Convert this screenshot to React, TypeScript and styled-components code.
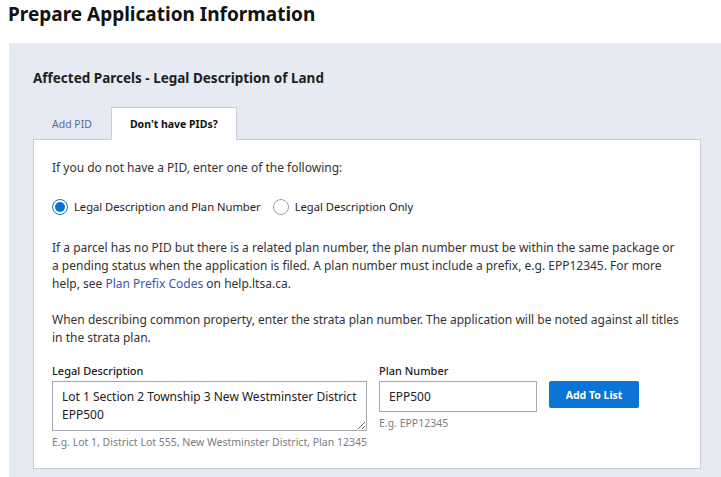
import styled, { createGlobalStyle } from 'styled-components';
import { useState } from 'react';

const GlobalStyle = createGlobalStyle`
  html, body {
    margin: 0;
    padding: 0;
    background: #fff;
    overflow: hidden;
  }
  body {
    font-family: "Noto Sans", "Open Sans", sans-serif;
    color: #313132;
  }
`;

const App: React.FC = () => {
  const [mode, setMode] = useState<'plan' | 'only'>('plan');
  const [tab, setTab] = useState<'pid' | 'none'>('none');
  const [legal, setLegal] = useState('Lot 1 Section 2 Township 3 New Westminster District EPP500');
  const [plan, setPlan] = useState('EPP500');

  return (
    <>
      <GlobalStyle />
      <Page>
        <Title>Prepare Application Information</Title>
        <Panel>
          <Heading>Affected Parcels - Legal Description of Land</Heading>
          <Tabs>
            <Tab active={tab === 'pid'} onClick={() => setTab('pid')}>Add PID</Tab>
            <Tab active={tab === 'none'} onClick={() => setTab('none')}>Don't have PIDs?</Tab>
          </Tabs>
          <Card>
            <Para>If you do not have a PID, enter one of the following:</Para>
            <RadioRow>
              <RadioLabel onClick={() => setMode('plan')}>
                <RadioDot checked={mode === 'plan'} />
                Legal Description and Plan Number
              </RadioLabel>
              <RadioLabel onClick={() => setMode('only')}>
                <RadioDot checked={mode === 'only'} />
                Legal Description Only
              </RadioLabel>
            </RadioRow>
            <Para>
              If a parcel has no PID but there is a related plan number, the plan number must be within the same package or
              a pending status when the application is filed. A plan number must include a prefix, e.g. EPP12345. For more
              help, see <Link href="#">Plan Prefix Codes</Link> on help.ltsa.ca.
            </Para>
            <Para>
              When describing common property, enter the strata plan number. The application will be noted against all titles
              in the strata plan.
            </Para>
            <FormRow>
              <Field>
                <Label>Legal Description</Label>
                <TextArea value={legal} onChange={(e) => setLegal(e.target.value)} />
                <Help>E.g. Lot 1, District Lot 555, New Westminster District, Plan 12345</Help>
              </Field>
              <Field>
                <Label>Plan Number</Label>
                <Input value={plan} onChange={(e) => setPlan(e.target.value)} />
                <Help>E.g. EPP12345</Help>
              </Field>
              <Button>Add To List</Button>
            </FormRow>
          </Card>
        </Panel>
      </Page>
    </>
  );
};

const Page = styled.div`
  padding: 0 0 0 9px;
`;

const Title = styled.h1`
  margin: 0 0 0 -1px;
  padding: 1px 0 0;
  height: 42px;
  font-size: 19px;
  font-weight: 700;
  color: #111;
`;

const Panel = styled.div`
  background: #e6eaf2;
  padding: 25px 20px 9px 24px;
`;

const Heading = styled.h2`
  margin: 0;
  font-size: 13.5px;
  font-weight: 700;
  line-height: 20px;
  color: #1e1e1e;
`;

const Tabs = styled.div`
  display: flex;
  margin-top: 19px;
`;

const Tab = styled.button<{ active: boolean }>`
  font-family: inherit;
  font-size: 10.5px;
  white-space: nowrap;
  height: 33px;
  padding: 0 18px;
  border: 1px solid ${(p) => (p.active ? '#c6cdd8' : 'transparent')};
  border-bottom: none;
  background: ${(p) => (p.active ? '#fff' : 'transparent')};
  color: ${(p) => (p.active ? '#111' : '#5a6a9a')};
  font-weight: ${(p) => (p.active ? 700 : 400)};
  margin-bottom: -1px;
  position: relative;
  z-index: 1;
  cursor: pointer;
`;

const Card = styled.div`
  background: #fff;
  border: 1px solid #c6cdd8;
  padding: 19px 19px 18px 18px;
`;

const Para = styled.p`
  margin: 0 0 18px;
  font-size: 12px;
  line-height: 18px;
  color: #333;
`;

const Link = styled.a`
  color: #4053b8;
  text-decoration: none;
`;

const RadioRow = styled.div`
  display: flex;
  gap: 12px;
  margin: -1px 0 20px;
  height: 25px;
  align-items: center;
`;

const RadioLabel = styled.label`
  display: flex;
  align-items: center;
  gap: 6px;
  font-size: 11.2px;
  color: #222;
  cursor: pointer;
`;

const RadioDot = styled.span<{ checked: boolean }>`
  width: 14px;
  height: 14px;
  border-radius: 50%;
  border: 1px solid ${(p) => (p.checked ? '#0b72d3' : '#9aa0a8')};
  background: #fff;
  display: inline-flex;
  align-items: center;
  justify-content: center;
  &::after {
    content: '';
    width: 10px;
    height: 10px;
    border-radius: 50%;
    background: ${(p) => (p.checked ? '#0b72d3' : 'transparent')};
  }
`;

const FormRow = styled.div`
  display: flex;
  align-items: flex-start;
  gap: 12px;
  margin-top: -2px;
`;

const Field = styled.div`
  display: flex;
  flex-direction: column;
`;

const Label = styled.label`
  font-size: 11px;
  font-weight: 500;
  color: #222;
  line-height: 16px;
  margin-bottom: 2px;
`;

const TextArea = styled.textarea`
  width: 315px;
  height: 50px;
  box-sizing: border-box;
  font-family: inherit;
  font-size: 12px;
  line-height: 18px;
  color: #222;
  padding: 6px 4px 4px 9px;
  border: 1px solid #a5a9ae;
  border-radius: 0;
  resize: vertical;
  overflow: hidden;
  outline: none;
`;

const Input = styled.input`
  width: 158px;
  height: 31px;
  box-sizing: border-box;
  font-family: inherit;
  font-size: 12px;
  color: #222;
  padding: 0 9px;
  border: 1px solid #a5a9ae;
  border-radius: 0;
  outline: none;
`;

const Help = styled.div`
  font-size: 10.5px;
  color: #7a7d82;
  line-height: 16px;
  margin-top: 3px;
`;

const Button = styled.button`
  margin-top: 18px;
  width: 90px;
  height: 27px;
  border: none;
  border-radius: 2px;
  background: #0b74d5;
  color: #fff;
  font-family: inherit;
  font-size: 10.5px;
  font-weight: 700;
  cursor: pointer;
`;

export default App;
